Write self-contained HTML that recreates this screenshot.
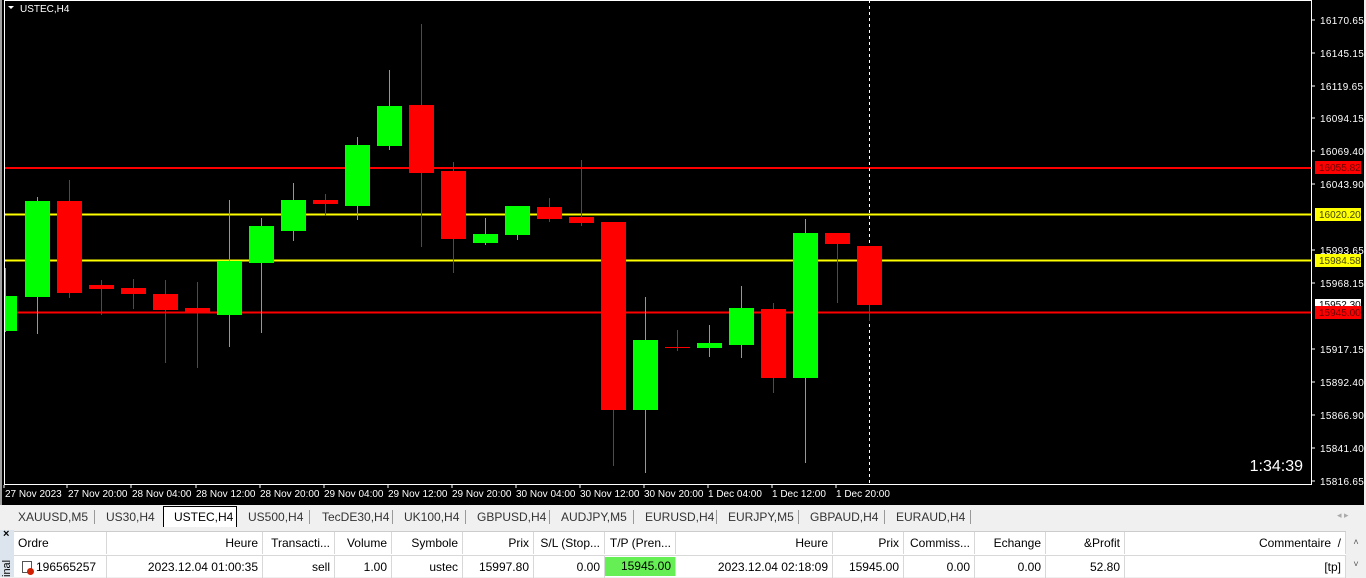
<!DOCTYPE html>
<html><head><meta charset="utf-8"><style>
*{margin:0;padding:0;box-sizing:border-box}
body{width:1366px;height:577px;overflow:hidden;background:#f0f0f0;font-family:"Liberation Sans",sans-serif;position:relative}
.abs{position:absolute}
svg text{font-family:"Liberation Sans",sans-serif}
.tabs{position:absolute;left:0;top:506px;height:20px;width:1366px;background:#f0f0f0;font-size:12px;color:#333}
.tab{position:absolute;top:4px}
.sep{position:absolute;top:4px;width:1px;height:14px;background:#999}
.grid{position:absolute;left:14px;top:532px;width:1332px;font-size:12px;color:#000}
.c{position:absolute;height:22px;line-height:22px;padding:0 4px;border-right:1px solid #d8d8d8;white-space:nowrap;overflow:hidden}
.r{text-align:right}
</style></head><body>
<div class="abs" style="left:0;top:0;width:4px;height:505px;background:#a0a0a0"></div>
<div class="abs" style="left:2px;top:0;width:1362px;height:505px;background:#000"></div>
<svg class="abs" style="left:0;top:0" width="1366" height="505">
<rect x="4.5" y="0.5" width="1307" height="484" fill="none" stroke="#fff"/>
<text x="20" y="12" fill="#fff" font-size="10">USTEC,H4</text>
<path d="M8 6h6l-3 3z" fill="#fff"/>
<g stroke-width="2">
<line x1="5" x2="1311" y1="168" y2="168" stroke="#f00"/>
<line x1="5" x2="1311" y1="214.5" y2="214.5" stroke="#ff0"/>
<line x1="5" x2="1311" y1="260.5" y2="260.5" stroke="#ff0"/>
<line x1="5" x2="1311" y1="312.5" y2="312.5" stroke="#f00"/>
</g>
<line x1="869.5" x2="869.5" y1="0" y2="484" stroke="#fff" stroke-dasharray="3,3"/>
<g>
<line x1="5.5" y1="268" x2="5.5" y2="332" stroke="#0f0"/><rect x="5" y="296" width="12" height="35" fill="#0f0"/>
<line x1="37.5" y1="197" x2="37.5" y2="334" stroke="#0f0"/><rect x="25" y="201" width="25" height="96" fill="#0f0"/>
<line x1="69.5" y1="180" x2="69.5" y2="298" stroke="#f00"/><rect x="57" y="201" width="25" height="92" fill="#f00"/>
<line x1="101.5" y1="280" x2="101.5" y2="315" stroke="#f00"/><rect x="89" y="285" width="25" height="4" fill="#f00"/>
<line x1="133.5" y1="279" x2="133.5" y2="309" stroke="#f00"/><rect x="121" y="288" width="25" height="6" fill="#f00"/>
<line x1="165.5" y1="280" x2="165.5" y2="363" stroke="#f00"/><rect x="153" y="294" width="25" height="16" fill="#f00"/>
<line x1="197.5" y1="282" x2="197.5" y2="368" stroke="#f00"/><rect x="185" y="308" width="25" height="5" fill="#f00"/>
<line x1="229.5" y1="200" x2="229.5" y2="347" stroke="#0f0"/><rect x="217" y="261" width="25" height="54" fill="#0f0"/>
<line x1="261.5" y1="218" x2="261.5" y2="333" stroke="#0f0"/><rect x="249" y="226" width="25" height="37" fill="#0f0"/>
<line x1="293.5" y1="183" x2="293.5" y2="241" stroke="#0f0"/><rect x="281" y="200" width="25" height="31" fill="#0f0"/>
<line x1="325.5" y1="194" x2="325.5" y2="216" stroke="#f00"/><rect x="313" y="200" width="25" height="4" fill="#f00"/>
<line x1="357.5" y1="137" x2="357.5" y2="220" stroke="#0f0"/><rect x="345" y="145" width="25" height="61" fill="#0f0"/>
<line x1="389.5" y1="70" x2="389.5" y2="150" stroke="#0f0"/><rect x="377" y="106" width="25" height="40" fill="#0f0"/>
<line x1="421.5" y1="24" x2="421.5" y2="247" stroke="#f00"/><rect x="409" y="105" width="25" height="68" fill="#f00"/>
<line x1="453.5" y1="162" x2="453.5" y2="273" stroke="#f00"/><rect x="441" y="171" width="25" height="68" fill="#f00"/>
<line x1="485.5" y1="218" x2="485.5" y2="245" stroke="#0f0"/><rect x="473" y="234" width="25" height="9" fill="#0f0"/>
<line x1="517.5" y1="206" x2="517.5" y2="240" stroke="#0f0"/><rect x="505" y="206" width="25" height="29" fill="#0f0"/>
<line x1="549.5" y1="198" x2="549.5" y2="222" stroke="#f00"/><rect x="537" y="207" width="25" height="12" fill="#f00"/>
<line x1="581.5" y1="160" x2="581.5" y2="226" stroke="#f00"/><rect x="569" y="217" width="25" height="6" fill="#f00"/>
<line x1="613.5" y1="222" x2="613.5" y2="466" stroke="#f00"/><rect x="601" y="222" width="25" height="188" fill="#f00"/>
<line x1="645.5" y1="297" x2="645.5" y2="473" stroke="#0f0"/><rect x="633" y="340" width="25" height="70" fill="#0f0"/>
<line x1="677.5" y1="330" x2="677.5" y2="351" stroke="#f00"/><rect x="665" y="347" width="25" height="1" fill="#f00"/>
<line x1="709.5" y1="325" x2="709.5" y2="357" stroke="#0f0"/><rect x="697" y="343" width="25" height="5" fill="#0f0"/>
<line x1="741.5" y1="286" x2="741.5" y2="358" stroke="#0f0"/><rect x="729" y="308" width="25" height="37" fill="#0f0"/>
<line x1="773.5" y1="303" x2="773.5" y2="393" stroke="#f00"/><rect x="761" y="309" width="25" height="69" fill="#f00"/>
<line x1="805.5" y1="219" x2="805.5" y2="463" stroke="#0f0"/><rect x="793" y="233" width="25" height="145" fill="#0f0"/>
<line x1="837.5" y1="233" x2="837.5" y2="303" stroke="#f00"/><rect x="825" y="233" width="25" height="11" fill="#f00"/>
<line x1="869.5" y1="246" x2="869.5" y2="321" stroke="#f00"/><rect x="857" y="246" width="25" height="59" fill="#f00"/>
</g>
<g fill="#fff" font-size="10" letter-spacing="0.3">
<text x="1320" y="24">16170.65</text><text x="1320" y="57">16145.15</text><text x="1320" y="90">16119.65</text>
<text x="1320" y="122">16094.15</text><text x="1320" y="155">16069.40</text><text x="1320" y="188">16043.90</text>
<text x="1320" y="254">15993.65</text><text x="1320" y="287">15968.15</text>
<text x="1320" y="353">15917.15</text><text x="1320" y="386">15892.40</text><text x="1320" y="419">15866.90</text>
<text x="1320" y="452">15841.40</text><text x="1320" y="485">15816.65</text>
</g>
<g stroke="#fff">
<path d="M1312 20h3M1312 53h3M1312 86h3M1312 118h3M1312 151h3M1312 184h3M1312 250h3M1312 283h3M1312 349h3M1312 382h3M1312 415h3M1312 448h3M1312 481h3"/>
<path d="M4 485v3M67 485v3M131 485v3M196 485v3M260 485v3M324 485v3M388 485v3M452 485v3M516 485v3M580 485v3M644 485v3M708 485v3M772 485v3M836 485v3"/>
</g>
<rect x="1315" y="161" width="46" height="13" fill="#f00"/><text x="1319" y="171" font-size="10" fill="#600">16055.82</text>
<rect x="1315" y="208" width="46" height="13" fill="#ff0"/><text x="1319" y="218" font-size="10" fill="#440">16020.20</text>
<rect x="1315" y="254" width="46" height="13" fill="#ff0"/><text x="1319" y="264" font-size="10" fill="#440">15984.58</text>
<rect x="1315" y="299" width="46" height="10" fill="#fff"/><text x="1319" y="308" font-size="10" fill="#000">15952.30</text>
<rect x="1315" y="306" width="46" height="13" fill="#f00"/><text x="1319" y="316" font-size="10" fill="#600">15945.00</text>
<text x="1303" y="471" font-size="16" fill="#fff" text-anchor="end">1:34:39</text>
<g fill="#fff" font-size="10">
<text x="5" y="497">27 Nov 2023</text><text x="68" y="497">27 Nov 20:00</text><text x="132" y="497">28 Nov 04:00</text>
<text x="196" y="497">28 Nov 12:00</text><text x="260" y="497">28 Nov 20:00</text><text x="324" y="497">29 Nov 04:00</text>
<text x="388" y="497">29 Nov 12:00</text><text x="452" y="497">29 Nov 20:00</text><text x="516" y="497">30 Nov 04:00</text>
<text x="580" y="497">30 Nov 12:00</text><text x="644" y="497">30 Nov 20:00</text><text x="708" y="497">1 Dec 04:00</text>
<text x="772" y="497">1 Dec 12:00</text><text x="836" y="497">1 Dec 20:00</text>
</g>
</svg>
<div class="tabs">
<span class="tab" style="left:18px">XAUUSD,M5</span><span class="sep" style="left:94px"></span>
<span class="tab" style="left:106px">US30,H4</span><span class="sep" style="left:163px"></span>
<div class="abs" style="left:163px;top:0;width:74px;height:21px;background:#fff;border:1px solid #000;border-bottom:none"></div>
<span class="tab" style="left:174px;color:#000">USTEC,H4</span>
<span class="tab" style="left:248px">US500,H4</span><span class="sep" style="left:309px"></span>
<span class="tab" style="left:322px">TecDE30,H4</span><span class="sep" style="left:392px"></span>
<span class="tab" style="left:404px">UK100,H4</span><span class="sep" style="left:465px"></span>
<span class="tab" style="left:477px">GBPUSD,H4</span><span class="sep" style="left:549px"></span>
<span class="tab" style="left:561px">AUDJPY,M5</span><span class="sep" style="left:633px"></span>
<span class="tab" style="left:645px">EURUSD,H4</span><span class="sep" style="left:716px"></span>
<span class="tab" style="left:728px">EURJPY,M5</span><span class="sep" style="left:798px"></span>
<span class="tab" style="left:810px">GBPAUD,H4</span><span class="sep" style="left:884px"></span>
<span class="tab" style="left:896px">EURAUD,H4</span><span class="sep" style="left:970px"></span>
<span class="tab" style="left:1337px;font-size:9px;color:#aaa">◂ ▸</span>
</div>
<div class="abs" style="left:0;top:527px;width:1366px;height:4px;background:#f0f0f0"></div>
<div class="abs" style="left:0;top:530px;width:14px;height:47px;background:#dce4ee"></div>
<div class="abs" style="left:3px;top:528px;font-size:11px;font-weight:bold">×</div>
<div class="abs" style="left:1px;font-size:11px;transform:rotate(-90deg);transform-origin:left top;top:577px">inal</div>
<div class="abs" style="left:14px;top:531px;width:1332px;height:46px;background:#fff;border-top:1px solid #ccc"></div>
<div class="grid">
<div class="c" style="left:0;width:93px;top:0">Ordre</div>
<div class="c r" style="left:93px;width:156px">Heure</div>
<div class="c r" style="left:249px;width:72px">Transacti...</div>
<div class="c r" style="left:321px;width:57px">Volume</div>
<div class="c r" style="left:378px;width:71px">Symbole</div>
<div class="c r" style="left:449px;width:71px">Prix</div>
<div class="c r" style="left:520px;width:71px">S/L (Stop...</div>
<div class="c r" style="left:591px;width:71px">T/P (Pren...</div>
<div class="c r" style="left:662px;width:157px">Heure</div>
<div class="c r" style="left:819px;width:71px">Prix</div>
<div class="c r" style="left:890px;width:71px">Commiss...</div>
<div class="c r" style="left:961px;width:71px">Echange</div>
<div class="c r" style="left:1032px;width:79px">&amp;Profit</div>
<div class="c r" style="left:1111px;width:221px">Commentaire &nbsp;/</div>
<div class="abs" style="left:0;top:23px;width:1332px;height:1px;background:#d8d8d8"></div>
<div style="position:absolute;top:24px;left:0;width:1332px">
<div class="c" style="left:0;width:93px;padding-left:22px">196565257</div>
<div class="abs" style="left:8px;top:5px;width:10px;height:12px;border:1px solid #555;background:#fff"></div>
<div class="abs" style="left:13px;top:12px;width:7px;height:7px;border-radius:50%;background:#d02000"></div>
<div class="c r" style="left:93px;width:156px">2023.12.04 01:00:35</div>
<div class="c r" style="left:249px;width:72px">sell</div>
<div class="c r" style="left:321px;width:57px">1.00</div>
<div class="c r" style="left:378px;width:71px">ustec</div>
<div class="c r" style="left:449px;width:71px">15997.80</div>
<div class="c r" style="left:520px;width:71px">0.00</div>
<div class="c r" style="left:591px;width:71px;background:#66ee55;top:1px;height:19px;line-height:19px">15945.00</div>
<div class="c r" style="left:662px;width:157px">2023.12.04 02:18:09</div>
<div class="c r" style="left:819px;width:71px">15945.00</div>
<div class="c r" style="left:890px;width:71px">0.00</div>
<div class="c r" style="left:961px;width:71px">0.00</div>
<div class="c r" style="left:1032px;width:79px">52.80</div>
<div class="c r" style="left:1111px;width:221px">[tp]</div>
</div>
</div>
<div class="abs" style="left:1346px;top:531px;width:20px;height:46px;background:#f0f0f0;font-size:9px;color:#555;text-align:center;line-height:22px">˄<br>˅</div>
</body></html>
